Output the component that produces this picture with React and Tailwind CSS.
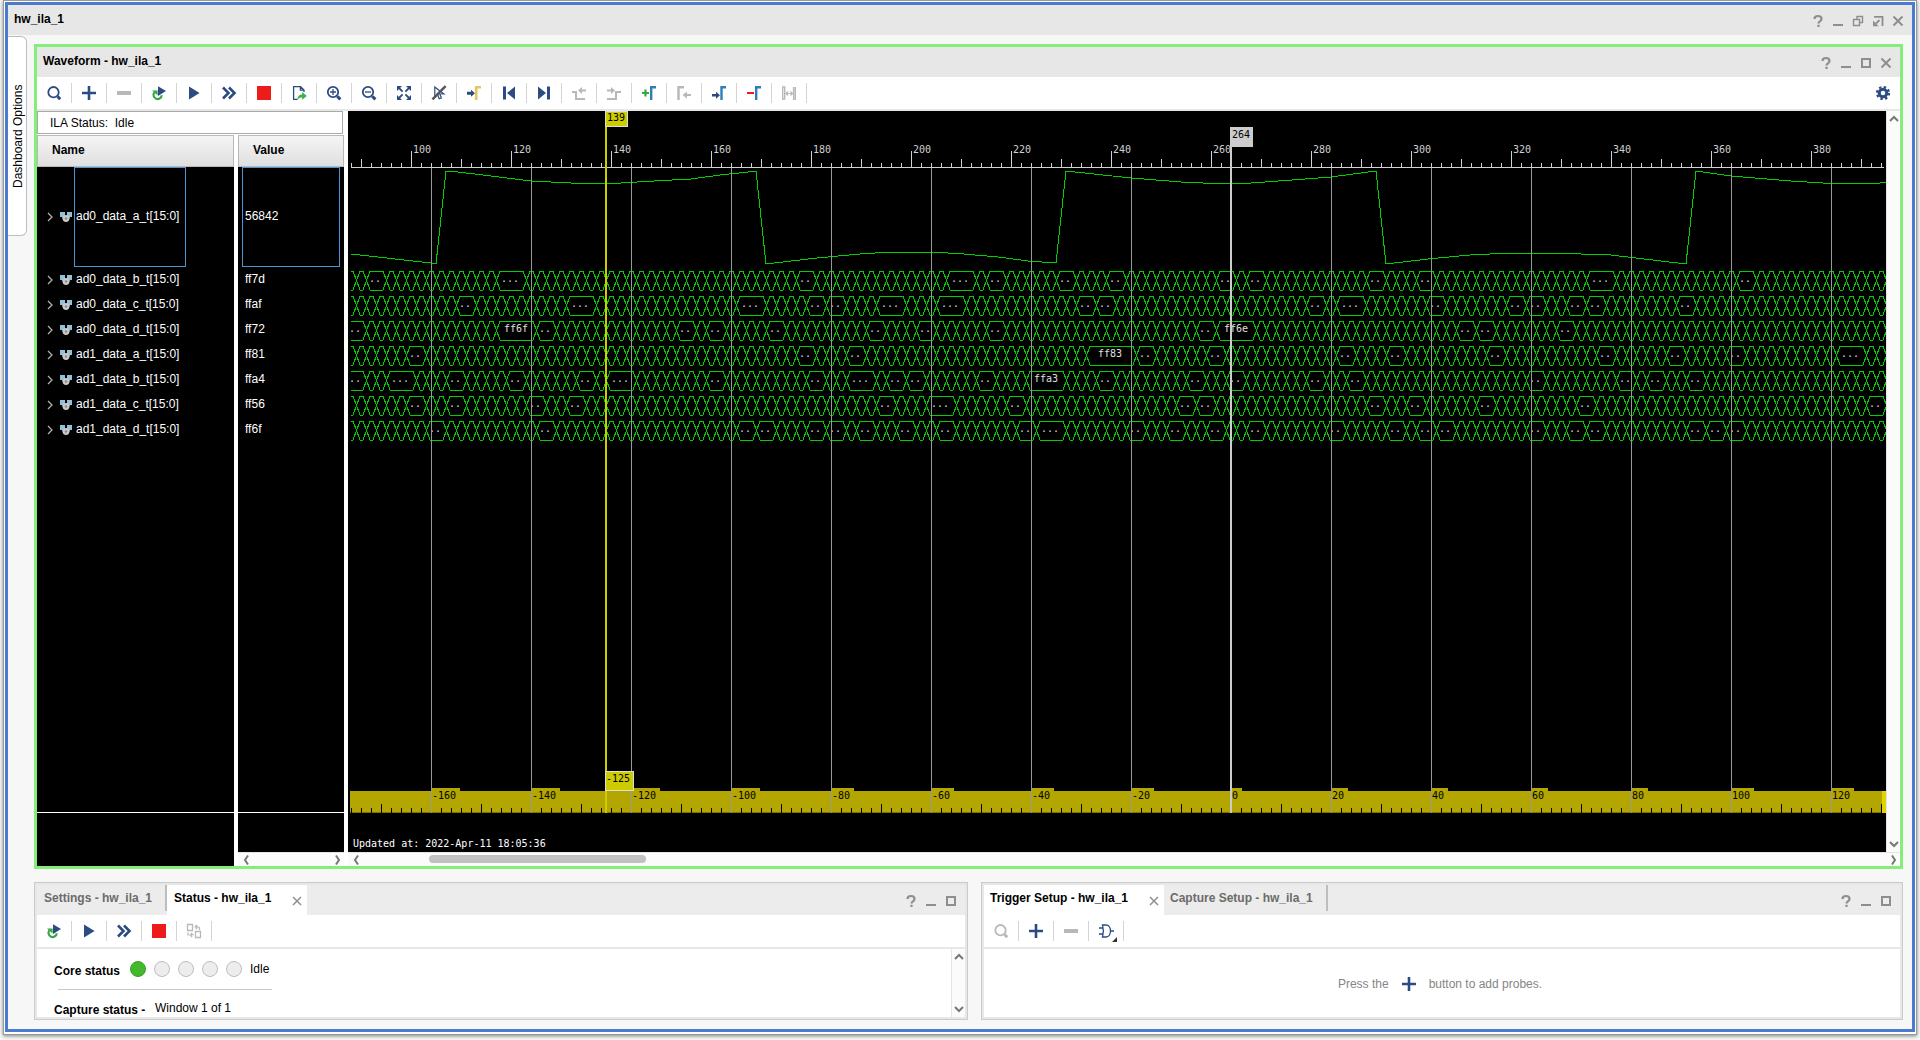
import React, { useState } from "react";

const NAVY = "#2d4b83";
const BLUE = "#2f7fb5";

const SIGNALS = [
    { name: "ad0_data_a_t[15:0]", value: "56842" },
    { name: "ad0_data_b_t[15:0]", value: "ff7d" },
    { name: "ad0_data_c_t[15:0]", value: "ffaf" },
    { name: "ad0_data_d_t[15:0]", value: "ff72" },
    { name: "ad1_data_a_t[15:0]", value: "ff81" },
    { name: "ad1_data_b_t[15:0]", value: "ffa4" },
    { name: "ad1_data_c_t[15:0]", value: "ff56" },
    { name: "ad1_data_d_t[15:0]", value: "ff6f" },
];

// one entry per bus: [first cell, cells held, label]
// a cell is two samples (10px), cells that are not listed change every time
const HOLDS = [
    [[2, 2], [15, 3], [45, 2], [60, 3], [64, 2], [71, 2], [76, 2], [87, 2], [90, 2], [102, 2], [107, 2], [124, 3], [139, 2]],
    [[11, 2], [22, 3], [39, 3], [46, 2], [48, 2], [53, 3], [59, 3], [73, 2], [75, 2], [96, 2], [99, 3], [108, 2], [116, 2], [118, 2], [122, 2], [124, 2], [133, 2]],
    [[0, 2], [15, 4, "ff6f"], [19, 2], [33, 2], [36, 2], [42, 2], [52, 2], [57, 2], [64, 2], [85, 2], [87, 4, "ff6e"], [111, 2], [113, 2], [121, 2]],
    [[6, 2], [45, 2], [50, 2], [74, 5, "ff83"], [79, 2], [86, 2], [99, 2], [104, 2], [114, 2], [125, 2], [132, 2], [138, 2], [149, 3]],
    [[0, 2], [4, 3], [10, 2], [16, 2], [23, 2], [26, 3], [36, 2], [46, 2], [50, 3], [54, 2], [56, 2], [63, 2], [68, 4, "ffa3"], [75, 2], [84, 2], [88, 2], [96, 2], [100, 2], [118, 2], [127, 2], [130, 2], [134, 2]],
    [[6, 2], [10, 2], [18, 2], [22, 2], [53, 2], [58, 3], [66, 2], [83, 2], [85, 2], [102, 2], [106, 2], [113, 2], [123, 2], [152, 2]],
    [[8, 2], [19, 2], [39, 2], [41, 2], [46, 2], [48, 2], [51, 2], [55, 2], [59, 2], [67, 2], [69, 3], [78, 2], [82, 2], [86, 2], [90, 2], [98, 2], [104, 2], [107, 2], [109, 2], [118, 2], [122, 2], [124, 2], [134, 2], [136, 2], [138, 2]],
];

const ANALOG =
    "3,143 83,152 88,153 98,60 110,61 143,65 183,70 223,72 273,72 306,70 343,68 372,64 400,61 408,60 418,153 469,147 512,143 543,141 583,141 616,143 650,146 680,150 708,152 718,60 783,67 833,71 855,72 903,72 944,69 983,66 1028,60 1038,153 1080,148 1122,144 1163,142 1202,142 1263,144 1313,150 1338,153 1348,60 1383,65 1443,70 1475,72 1532,72 1538,71";

const CELLS = 154;
const cellX = (k) => k * 10 - 2;
const sampleX = (n) => 63 + (n - 100) * 5;
const range = (from, to, step) => {
    const out = [];
    for (let i = from; i <= to; i += step) out.push(i);
    return out;
};

function busPath(holds, top) {
    const bottom = top + 19;
    let d = "";
    let k = 0;
    while (k < CELLS) {
        const hold = holds.find((h) => h[0] === k);
        const len = hold ? hold[1] : 1;
        const a = cellX(k);
        const b = cellX(k + len);
        d += `M${a - 3} ${top}L${a + 4} ${bottom}H${b - 3}M${a - 3} ${bottom}L${a + 4} ${top}H${b - 3}`;
        k += len;
    }
    const end = cellX(k);
    return d + `M${end - 3} ${top}L${end + 4} ${bottom}M${end - 3} ${bottom}L${end + 4} ${top}`;
}

function Bus({ holds, top }) {
    return (
        <g>
            <path d={busPath(holds, top)} fill="none" stroke="#00d000" shapeRendering="crispEdges" />
            {holds.map(([k, len, label]) => {
                const offset = label ? (len === 5 ? 12 : 8) : len === 3 ? 5 : 3;
                return (
                    <text
                        key={k}
                        x={cellX(k) + offset}
                        y={top + 11}
                        fill="#e0e0e0"
                        className={label ? "" : "font-['Liberation_Mono',monospace]"}
                    >
                        {label || (len === 3 ? "..." : "..")}
                    </text>
                );
            })}
        </g>
    );
}

function Traces() {
    return (
        <svg className="block w-full flex-1 min-h-80 font-['DejaVu_Sans_Mono','Liberation_Mono',monospace] text-[10px]">
            <defs>
                <clipPath id="traces">
                    <rect x="3" y="0" width="1536" height="400" />
                </clipPath>
            </defs>
            <g fill="#d0d0d0" shapeRendering="crispEdges">
                <rect x="3" y="56" width="1533" height="1" />
                {range(88, 394, 2).map((n) => {
                    const h = n % 20 === 0 ? 16 : n % 10 === 0 ? 8 : 4;
                    return <rect key={n} x={sampleX(n)} y={56 - h} width="1" height={h} />;
                })}
            </g>
            <g fill="#d0d0d0">
                {range(100, 380, 20).map((n) => (
                    <text key={n} x={sampleX(n) + 2} y="42">{n}</text>
                ))}
            </g>
            <g clipPath="url(#traces)">
                <polyline points={ANALOG} fill="none" stroke="#00d000" shapeRendering="crispEdges" />
                {HOLDS.map((holds, i) => (
                    <Bus key={i} holds={holds} top={160 + i * 25} />
                ))}
            </g>
            {range(104, 384, 20).map((n) => (
                <line key={n} x1={sampleX(n)} x2={sampleX(n)} y1="57" y2="100%" stroke="#999999" shapeRendering="crispEdges" />
            ))}
            <g shapeRendering="crispEdges">
                <line x1="258" x2="258" y1="0" y2="100%" stroke="#cccc00" strokeWidth="2" />
                <rect x="257" y="0" width="23" height="16" fill="#dddddd" />
                <rect x="258" y="1" width="21" height="14" fill="#cccc00" />
                <line x1="883" x2="883" y1="16" y2="100%" stroke="#cccccc" strokeWidth="2" />
                <rect x="882" y="16" width="23" height="20" fill="#cccccc" />
            </g>
            <text x="259" y="10" fill="#000000">139</text>
            <text x="884" y="27" fill="#000000">264</text>
        </svg>
    );
}

function TriggerRuler() {
    return (
        <svg className="block w-full h-[81px] shrink-0 font-['DejaVu_Sans_Mono','Liberation_Mono',monospace] text-[10px]">
            <g shapeRendering="crispEdges">
                {range(104, 384, 20).map((n) => (
                    <rect key={n} x={sampleX(n)} y="0" width="1" height="20" fill="#999999" />
                ))}
                <rect x="2" y="20" width="1532" height="22" fill="#b3a600" />
                <rect x="1534" y="20" width="4" height="22" fill="#e0d400" />
                <rect x="2" y="41" width="1532" height="1" fill="#7d7400" />
                {range(88, 394, 2).map((n) => {
                    const h = (n - 264) % 10 === 0 ? 9 : 5;
                    return <rect key={n} x={sampleX(n)} y={42 - h} width="1" height={h} fill="#000000" />;
                })}
                {range(-160, 120, 20).map((n) => (
                    <g key={n}>
                        <rect x={sampleX(n + 264)} y="17" width={String(n).length * 6 + 5} height="12" fill="#b3a600" />
                        <rect x={sampleX(n + 264)} y="17" width="1" height="25" fill="#999999" />
                    </g>
                ))}
                <rect x="257" y="0" width="2" height="42" fill="#cccc00" />
                <rect x="257" y="0" width="29" height="20" fill="#dddddd" />
                <rect x="258" y="1" width="27" height="18" fill="#cccc00" />
                <rect x="882" y="0" width="2" height="42" fill="#cccccc" />
            </g>
            {range(-160, 120, 20).map((n) => (
                <text key={n} x={sampleX(n + 264) + 1} y="28" fill="#000000">{n}</text>
            ))}
            <text x="258" y="11" fill="#000000">-125</text>
            <text x="5" y="76" fill="#ffffff">Updated at: 2022-Apr-11 18:05:36</text>
        </svg>
    );
}

// toolbar drawings, all on a 16px grid
const ICONS = {
    search: (
        <g fill="none" stroke="currentColor">
            <circle cx="7.5" cy="7.2" r="5.2" strokeWidth="1.8" />
            <path d="M11.6 11.4l2.6 2.8" strokeWidth="3" />
        </g>
    ),
    plus: <path d="M8 1v14M1 8h14" stroke="currentColor" strokeWidth="2.6" />,
    minus: <path d="M1 8h14" stroke="currentColor" strokeWidth="4" />,
    rerun: (
        <g>
            <path d="M3.4 7.4A4.1 4.1 0 1 0 10.7 10.2" fill="none" stroke="#35a845" strokeWidth="2.2" />
            <path d="M1 5.4h5.6v5z" fill="#35a845" />
            <path d="M7 1.2l8 4.9-8 4.9z" fill={NAVY} />
        </g>
    ),
    play: <path d="M3 1.5v13L13.6 8z" fill="currentColor" />,
    forward: <path d="M2 2.5L7.5 8 2 13.5M8 2.5L13.5 8 8 13.5" fill="none" stroke="currentColor" strokeWidth="2.6" />,
    stop: <rect x="1" y="1" width="14" height="14" fill="#ee1b1b" />,
    exportDoc: (
        <g>
            <path d="M13 7V5L9.6 1.7H2.6v12.6h4M9.4 1.7V5.2H13" fill="none" stroke={NAVY} strokeWidth="1.3" />
            <path d="M6.4 14.8c.2-3.6 1.8-5.4 4.8-5.4V7l4.6 4-4.6 3.8v-2.4c-2 0-3.4.6-4.8 2.4z" fill="#3db04b" />
        </g>
    ),
    zoomIn: (
        <g fill="none" stroke="currentColor">
            <circle cx="7" cy="7" r="5.2" strokeWidth="1.8" />
            <path d="M11.2 11.2l3.2 3.2" strokeWidth="3" />
            <path d="M7 4v6M4 7h6" strokeWidth="1.3" />
        </g>
    ),
    zoomOut: (
        <g fill="none" stroke="currentColor">
            <circle cx="7" cy="7" r="5.2" strokeWidth="1.8" />
            <path d="M11.2 11.2l3.2 3.2" strokeWidth="3" />
            <path d="M4 7h6" strokeWidth="1.3" />
        </g>
    ),
    fit: (
        <g>
            <path d="M1 1h5L1 6zM15 1v5l-5-5zM1 15v-5l5 5zM15 15h-5l5-5z" fill="currentColor" />
            <path d="M2 2l4.6 4.6M14 2L9.4 6.6M2 14l4.6-4.6M14 14L9.4 9.4" stroke="currentColor" strokeWidth="1.8" />
        </g>
    ),
    cursorOff: (
        <g fill="none">
            <path d="M3.8 2v10.4l2.8-2.6 1.6 4 2.2-.9-1.6-3.9h4z" stroke={NAVY} strokeWidth="1.2" />
            <path d="M1.4 14.4L14.6 1.2" stroke="#555555" strokeWidth="2.4" />
        </g>
    ),
    gotoCursor: (
        <g>
            <path d="M1 6.8h4V4.8l4 3.5-4 3.5v-2H1z" fill={NAVY} />
            <path d="M10.2 15V2.2H15" fill="none" stroke="#e3c861" strokeWidth="2.6" />
        </g>
    ),
    first: <path d="M2 1.5h3v13H2zM14 1.5v13L6 8z" fill="currentColor" />,
    last: <path d="M11 1.5h3v13h-3zM2 1.5v13L10 8z" fill="currentColor" />,
    prevEdge: (
        <g>
            <path d="M1 7h4v7h9" fill="none" stroke="currentColor" strokeWidth="2" />
            <path d="M15 4.5h-4V2L7 5.5 11 9V6.5h4z" fill="currentColor" />
        </g>
    ),
    nextEdge: (
        <g>
            <path d="M1 14h9V7h5" fill="none" stroke="currentColor" strokeWidth="2" />
            <path d="M1 4.5h4V2l4 3.5L5 9V6.5H1z" fill="currentColor" />
        </g>
    ),
    addMarker: (
        <g fill="none">
            <path d="M4.5 4.5v7M1 8h7" stroke="#35a845" strokeWidth="2.2" />
            <path d="M10.2 15V2.2H15" stroke={BLUE} strokeWidth="2.4" />
        </g>
    ),
    prevMarker: (
        <g>
            <path d="M2.5 15V2.2H8" fill="none" stroke="currentColor" strokeWidth="2.4" />
            <path d="M15 9h-4V6.5L6.5 10l4.5 3.5V11h4z" fill="currentColor" />
        </g>
    ),
    nextMarker: (
        <g>
            <path d="M1 9h4V6.8l4 3.5-4 3.5v-2.2H1z" fill={NAVY} />
            <path d="M10.5 15V2.2H15" fill="none" stroke={BLUE} strokeWidth="2.4" />
        </g>
    ),
    removeMarker: (
        <g fill="none">
            <path d="M1 8h7" stroke="#ee1b1b" strokeWidth="2" />
            <path d="M10.2 15V2.2H15" stroke={BLUE} strokeWidth="2.4" />
        </g>
    ),
    span: (
        <g fill="none" stroke="currentColor" strokeWidth="1.4">
            <path d="M1.7 2h2v12h-2zM14.3 2v13M12.6 2v13" />
            <path d="M5 8.5h6.5M7 6.5l-2 2 2 2M9.5 6.5l2 2-2 2" strokeWidth="1.2" />
        </g>
    ),
    gear: (
        <g fill="none" stroke="currentColor">
            <circle cx="8" cy="8" r="3.8" strokeWidth="3" />
            <circle cx="8" cy="8" r="6" strokeWidth="2.2" strokeDasharray="2.4 2.312" />
        </g>
    ),
    swap: (
        <g fill="none" stroke="currentColor" strokeWidth="1.3">
            <path d="M1.5 1.5h5v6h-5zM9.5 8.5h5v6h-5z" />
            <path d="M13.5 7V4H9.5M11 2L9 4l2 2M2 9.5V12h4M5 10l2 2-2 2" strokeDasharray="3 1" />
        </g>
    ),
    gate: (
        <g fill="none" stroke="currentColor" strokeWidth="1.3">
            <path d="M4.5 2H8c3 0 4.5 3 4.5 6S11 14 8 14H4.5c1.2-4 1.2-8 0-12z" />
            <path d="M1 5h4M1 11h4M12.5 8H16" />
        </g>
    ),
    help: <path d="M4.5 6c0-4 7-4 7 0 0 2.5-3 2.2-3 4.5M8.5 11.8V14" fill="none" stroke="currentColor" strokeWidth="2.2" />,
    minimize: <rect x="3" y="11" width="10" height="2" fill="currentColor" />,
    maximize: <rect x="4" y="4" width="8" height="8" fill="none" stroke="currentColor" strokeWidth="2" />,
    restore: <path d="M7 7V3.5h5.5v6H9.5M3.5 6.5h6v6h-6z" fill="none" stroke="currentColor" strokeWidth="1.4" />,
    float: (
        <g>
            <path d="M4 3.8h8.5V13M9.5 7L6 10.5" fill="none" stroke="currentColor" strokeWidth="1.8" />
            <path d="M3 7.5v5.7h5.7z" fill="currentColor" />
        </g>
    ),
    close: <path d="M3.5 3.5l9 9M12.5 3.5l-9 9" stroke="currentColor" strokeWidth="2" />,
    up: <path d="M4 10l4-4 4 4" fill="none" stroke="#777777" strokeWidth="2" />,
    down: <path d="M4 6l4 4 4-4" fill="none" stroke="#777777" strokeWidth="2" />,
    left: <path d="M10 3.5L7 8l3 4.5" fill="none" stroke="#777777" strokeWidth="2" />,
    right: <path d="M8 3.5L11 8l-3 4.5" fill="none" stroke="#777777" strokeWidth="2" />,
};

function Icon({ name, className = "" }) {
    return (
        <svg viewBox="0 0 16 16" className={`size-4 shrink-0 ${className}`} aria-hidden="true">
            {ICONS[name]}
        </svg>
    );
}

function Toolbar({ items, children }) {
    return (
        <div className="flex items-center h-[34px] bg-white border-b-2 border-[#e7e7e7]">
            {items.map(([icon, label, off]) => (
                <button
                    key={label}
                    type="button"
                    title={label}
                    aria-label={label}
                    disabled={off}
                    className={`relative flex items-center justify-center w-[35px] h-5 border-r border-[#d4d4d4] ${off ? "text-[#b8b8b8]" : "text-[#2d4b83]"}`}
                >
                    <Icon name={icon} />
                    {icon === "gate" && (
                        <svg viewBox="0 0 5 5" className="absolute right-1.5 -bottom-px size-[5px]">
                            <path d="M5 0v5H0z" fill="#333333" />
                        </svg>
                    )}
                </button>
            ))}
            {children}
        </div>
    );
}

function WindowButtons({ names }) {
    return (
        <div className="flex ml-auto pr-1 pt-0.5 text-[#8e8e8e]">
            {names.map((name) => (
                <button key={name} type="button" aria-label={name} className="flex justify-center w-5">
                    <Icon name={name} />
                </button>
            ))}
        </div>
    );
}

function SignalIcon() {
    return (
        <svg viewBox="0 0 12 12" className="w-3 h-3 shrink-0" aria-hidden="true">
            <path d="M1 5h10L8 10H4z" fill="#8c8c8c" />
            <path d="M0 1h5v5H0zM7 1h5v5H7z" fill="#93c1d8" />
            <circle cx="6" cy="7.5" r="3.4" fill="#c9c9c9" />
            <circle cx="6" cy="7.5" r="1.2" fill="#8a8a8a" />
        </svg>
    );
}

const HEAD = "h-8 border border-[#b9b9b9] bg-linear-to-b from-[#f5f5f5] to-[#dfdfe0] pl-3.5 pb-0.5 text-left font-bold text-black";

function NameColumn() {
    return (
        <div className="flex flex-col bg-black text-white">
            <table className="w-full border-separate border-spacing-0">
                <thead>
                    <tr><th scope="col" className={HEAD}>Name</th></tr>
                </thead>
                <tbody>
                    {SIGNALS.map((s, i) => (
                        <tr key={s.name}>
                            <td className="p-0">
                                <div className={`flex items-center pl-2 ${i === 0 ? "h-[100px]" : "h-[25px]"}`}>
                                    <button type="button" aria-label={`Expand ${s.name}`} className="w-[15px]">
                                        <svg viewBox="0 0 10 12" className="w-2.5 h-3">
                                            <path d="M3 2l4 4-4 4" fill="none" stroke="#b0b0b0" strokeWidth="1.3" />
                                        </svg>
                                    </button>
                                    <SignalIcon />
                                    <span className={`flex items-center ml-0.5 pl-px pb-0.5 h-full border ${i === 0 ? "w-28 border-[#4a95d6]" : "border-transparent"}`}>
                                        {s.name}
                                    </span>
                                </div>
                            </td>
                        </tr>
                    ))}
                </tbody>
            </table>
            <div className="mt-auto h-[54px] border-t border-white" />
        </div>
    );
}

function ValueColumn() {
    return (
        <div className="flex flex-col bg-black text-white">
            <table className="w-full border-separate border-spacing-0">
                <thead>
                    <tr><th scope="col" className={HEAD}>Value</th></tr>
                </thead>
                <tbody>
                    {SIGNALS.map((s, i) => (
                        <tr key={s.name}>
                            <td className="p-0">
                                <div className={`flex items-center mx-1 px-0.5 pb-0.5 border ${i === 0 ? "h-[100px] border-[#4a95d6]" : "h-[25px] border-transparent"}`}>
                                    {s.value}
                                </div>
                            </td>
                        </tr>
                    ))}
                </tbody>
            </table>
            <div className="mt-auto h-10 border-t border-white" />
            <div className="flex items-center justify-between h-3.5 border-t border-[#e4e4e4] bg-[#fbfbfb]">
                <Icon name="left" />
                <Icon name="right" />
            </div>
        </div>
    );
}

const WAVE_TOOLS = [
    ["search", "Find"], ["plus", "Add Probes"], ["minus", "Remove Selected", true], ["rerun", "Auto Re-trigger"],
    ["play", "Run Trigger"], ["forward", "Run Trigger Immediate"], ["stop", "Stop Trigger"], ["exportDoc", "Export Data"],
    ["zoomIn", "Zoom In"], ["zoomOut", "Zoom Out"], ["fit", "Zoom Fit"], ["cursorOff", "Snap to Transition"],
    ["gotoCursor", "Go to Cursor"], ["first", "Go to Start"], ["last", "Go to End"], ["prevEdge", "Previous Transition", true],
    ["nextEdge", "Next Transition", true], ["addMarker", "Add Marker"], ["prevMarker", "Previous Marker", true],
    ["nextMarker", "Next Marker"], ["removeMarker", "Delete Marker"], ["span", "Swap Cursors", true],
];

const STATUS_TOOLS = [
    ["rerun", "Auto Re-trigger"], ["play", "Run Trigger"], ["forward", "Run Trigger Immediate"],
    ["stop", "Stop Trigger"], ["swap", "Toggle Window", true],
];

const TRIGGER_TOOLS = [
    ["search", "Find", true], ["plus", "Add Probe"], ["minus", "Remove Probe", true], ["gate", "Trigger Condition"],
];

function WaveformPanel() {
    return (
        <section className="flex flex-col flex-1 border-3 border-[#84ee7b] bg-white">
            <header className="flex items-center h-[30px] pl-1.5 bg-[#e7e7e7]">
                <h2 className="pb-0.5 font-bold">Waveform - hw_ila_1</h2>
                <WindowButtons names={["help", "minimize", "maximize", "close"]} />
            </header>
            <Toolbar items={WAVE_TOOLS}>
                <button type="button" aria-label="Settings" className="ml-auto mr-[9px] text-[#2d4b83]">
                    <Icon name="gear" />
                </button>
            </Toolbar>
            <div className="flex flex-1">
                <div className="flex flex-col w-[307px] mr-1 shrink-0">
                    <div className="flex items-center h-[23px] mr-px mb-px pl-3 border border-[#a9a9a9] whitespace-pre">
                        ILA Status:  Idle
                    </div>
                    <div className="grid grid-cols-[197px_106px] gap-1 flex-1">
                        <NameColumn />
                        <ValueColumn />
                    </div>
                </div>
                <div className="flex flex-col flex-1 min-w-0">
                    <div className="flex flex-1">
                        <div className="flex flex-col flex-1 min-w-0 bg-black">
                            <Traces />
                            <TriggerRuler />
                        </div>
                        <div className="flex flex-col items-center justify-between w-3.5 border-l border-[#e4e4e4] bg-[#fbfbfb]">
                            <Icon name="up" />
                            <Icon name="down" />
                        </div>
                    </div>
                    <div className="flex items-center h-3.5 border-t border-[#e4e4e4] bg-[#fbfbfb]">
                        <Icon name="left" />
                        <div className="h-2 w-[14%] ml-[65px] mb-0.5 rounded-full bg-[#c1c1c1]" />
                        <Icon name="right" className="ml-auto" />
                    </div>
                </div>
            </div>
        </section>
    );
}

function Tab({ active, onClick, children, className }) {
    return (
        <button
            type="button"
            role="tab"
            aria-selected={active}
            onClick={onClick}
            className={`flex items-center justify-between font-bold ${active ? "h-[30px] bg-white text-black" : "h-[26px] border-r-2 border-[#bdbdbd] text-[#6b6b6b]"} ${className}`}
        >
            <span className={active ? "pb-1" : ""}>{children}</span>
            {active && (
                <svg viewBox="0 0 10 10" className="size-2.5 mr-[5px] mt-0.5">
                    <path d="M1 1l8 8M9 1L1 9" stroke="#8e8e8e" strokeWidth="1.5" />
                </svg>
            )}
        </button>
    );
}

function DockPanel({ tabs, current, tools, children }) {
    const [active, setActive] = useState(current);
    return (
        <section className="p-0.5 border border-[#cbcbcb] bg-[#e7e7e7]">
            <div className="flex items-start h-[30px] bg-[#ececec]" role="tablist">
                {tabs.map(([title, size], i) => (
                    <Tab key={title} active={active === i} onClick={() => setActive(i)} className={size}>
                        {title}
                    </Tab>
                ))}
                <div className="flex ml-auto pt-1.5">
                    <WindowButtons names={["help", "minimize", "maximize"]} />
                </div>
            </div>
            <Toolbar items={tools} />
            {children}
        </section>
    );
}

export default function App() {
    return (
        <div className="min-h-screen flex flex-col bg-[#fafafa] px-[3px] pb-[5px] font-['Liberation_Sans',Arial,sans-serif] text-xs text-black">
            <div className="flex flex-col flex-1 border border-[#9a9a9a] bg-white p-px pb-0.5 shadow-[0_1px_4px_rgba(0,0,0,0.5)]">
                <div className="flex flex-col flex-1 border-3 border-[#4a7bcf] bg-[#f7f7f7]">
                    <header className="flex items-center h-[30px] pl-1.5 bg-[#e7e7e7]">
                        <h1 className="pb-0.5 font-bold">hw_ila_1</h1>
                        <WindowButtons names={["help", "minimize", "restore", "float", "close"]} />
                    </header>
                    <div className="flex flex-1">
                        {/* turned by 180deg so the label reads upwards */}
                        <button
                            type="button"
                            className="flex items-center justify-center w-[19px] h-[200px] mt-px mr-[7px] pr-0.5 border border-r-0 border-[#bdbdbd] rounded-l-md bg-white whitespace-nowrap [writing-mode:vertical-rl] rotate-180"
                        >
                            Dashboard Options
                        </button>
                        <main className="flex flex-col flex-1 min-w-0 gap-[13px] pt-[9px] pr-[9px] pb-[9px]">
                            <WaveformPanel />
                            <div className="grid grid-cols-[934fr_922fr] gap-[13px]">
                                <DockPanel
                                    tabs={[["Settings - hw_ila_1", "w-[130px] pl-[7px]"], ["Status - hw_ila_1", "w-[140px] pl-[7px]"]]}
                                    current={1}
                                    tools={STATUS_TOOLS}
                                >
                                    <div className="flex justify-between h-[68px] bg-white overflow-hidden">
                                        <div className="pl-[17px] pt-3">
                                            <div className="flex items-center h-4">
                                                <span className="w-[76px] pt-1 font-bold">Core status</span>
                                                <div className="flex gap-2">
                                                    <span className="size-4 rounded-full border border-[#3a9f28] bg-[#43b82c]" />
                                                    <span className="size-4 rounded-full border border-[#bdbdbd] bg-[#ededed]" />
                                                    <span className="size-4 rounded-full border border-[#bdbdbd] bg-[#ededed]" />
                                                    <span className="size-4 rounded-full border border-[#bdbdbd] bg-[#ededed]" />
                                                    <span className="size-4 rounded-full border border-[#bdbdbd] bg-[#ededed]" />
                                                </div>
                                                <span className="ml-2">Idle</span>
                                            </div>
                                            <hr className="w-[214px] ml-1 mt-3 border-[#c8c8c8]" />
                                            <div className="flex items-end pt-2.5 leading-4">
                                                <span className="w-[101px] pt-0.5 font-bold">Capture status -</span>
                                                <span className="pb-0.5">Window 1 of 1</span>
                                            </div>
                                        </div>
                                        <div className="flex flex-col items-center justify-between w-3.5 border-l border-[#e4e4e4] bg-[#fbfbfb]">
                                            <Icon name="up" />
                                            <Icon name="down" />
                                        </div>
                                    </div>
                                </DockPanel>
                                <DockPanel
                                    tabs={[["Trigger Setup - hw_ila_1", "w-[180px] pl-1.5"], ["Capture Setup - hw_ila_1", "w-[164px] pl-1.5"]]}
                                    current={0}
                                    tools={TRIGGER_TOOLS}
                                >
                                    <p className="flex items-center justify-center gap-3 h-[68px] pt-0.5 pr-1 bg-white text-[#858585]">
                                        Press the
                                        <Icon name="plus" className="text-[#2d4b83]" />
                                        button to add probes.
                                    </p>
                                </DockPanel>
                            </div>
                        </main>
                    </div>
                </div>
            </div>
        </div>
    );
}
